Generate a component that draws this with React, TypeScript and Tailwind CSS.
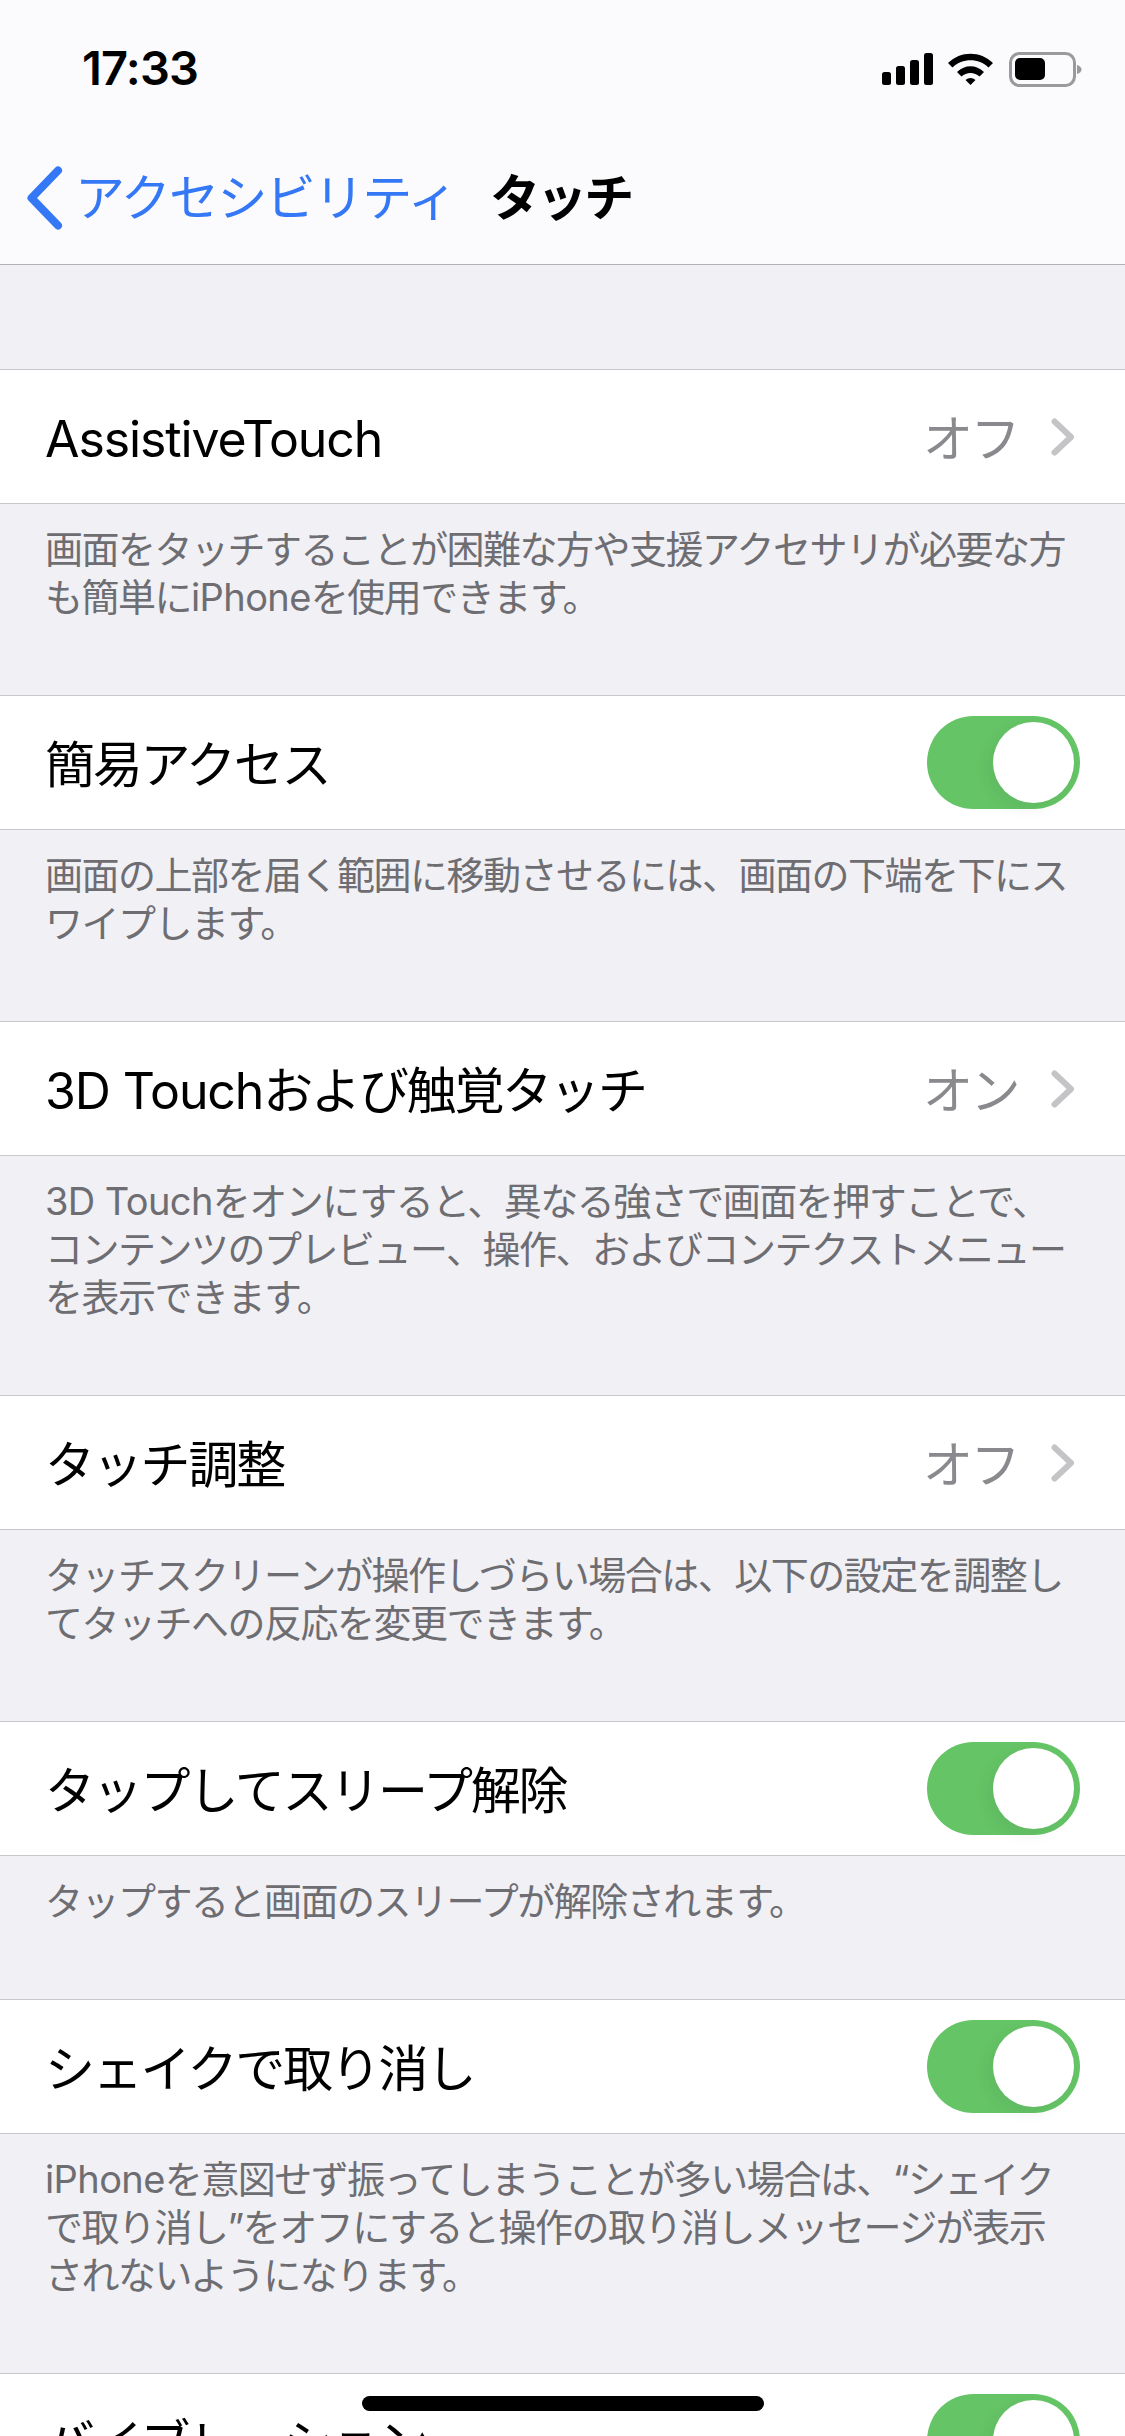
import React from "react";

function Mixed({ text, latin }: { text: string; latin: string }) {
  const parts = text.split(/([\x20-\x7e]+)/).filter(Boolean);
  return (
    <>
      {parts.map((p, i) =>
        /^[\x20-\x7e]+$/.test(p) ? (
          <span key={i} className={latin}>{p}</span>
        ) : (
          <span key={i}>{p}</span>
        )
      )}
    </>
  );
}

function Chevron() {
  return (
    <svg width="24" height="38" viewBox="0 0 24 38" fill="none" className="ml-[33px] mr-[5px]">
      <path d="M3.5 3.5 L20 19 L3.5 34.5" stroke="#c4c4c7" strokeWidth="6" strokeLinecap="round" strokeLinejoin="round" />
    </svg>
  );
}

function Toggle() {
  return (
    <div className="w-[153px] h-[93px] rounded-full bg-[#65c466] p-[6px] flex justify-end">
      <div className="w-[81px] h-[81px] rounded-full bg-white shadow-[-6px_6px_16px_rgba(0,0,0,0.06)]" />
    </div>
  );
}

function Row({ label, value, toggle }: { label: string; value?: string; toggle?: boolean }) {
  return (
    <div className="h-[135px] shrink-0 bg-white border-y border-[#c8c7cc] flex items-center pl-[45px] pr-[45px]">
      <span className="flex-1 pt-[5px] text-[50px] leading-none text-black tracking-[-2.2px] whitespace-nowrap">
        <Mixed text={label} latin="tracking-[-1.1px]" />
      </span>
      {value && <span className="pt-[5px] text-[50px] leading-none text-[#8a8a8e] tracking-[-2.5px]">{value}</span>}
      {value && <Chevron />}
      {toggle && <Toggle />}
    </div>
  );
}

function Footer({ lines }: { lines: string[] }) {
  return (
    <div className="shrink-0 pt-[21px] pb-[74px] pl-[45px] text-[38px] leading-[48px] text-[#6d6d72] tracking-[-1.5px]">
      {lines.map((l) => (
        <div key={l} className="whitespace-nowrap">
          <Mixed text={l} latin="tracking-[-0.6px]" />
        </div>
      ))}
    </div>
  );
}

function StatusIcons() {
  return (
    <svg width="200" height="36" viewBox="0 0 200 36" className="block">
      <rect x="0" y="20" width="9" height="13" rx="2.5" fill="#000" />
      <rect x="14" y="14" width="9" height="19" rx="2.5" fill="#000" />
      <rect x="28" y="8" width="9" height="25" rx="2.5" fill="#000" />
      <rect x="42" y="1" width="9" height="32" rx="2.5" fill="#000" />
      <path d="M66 11 C78.5 -1.5 98.5 -1.5 111 11 L106.5 15.5 C96.5 5.8 80.5 5.8 70.5 15.5 Z" fill="#000" />
      <path d="M75 20 C83 12.3 94 12.3 102 20 L97.5 24.5 C92.5 19.8 84.5 19.8 79.5 24.5 Z" fill="#000" />
      <path d="M83.5 28 C86.5 25.3 90.5 25.3 93.5 28 L88.5 33 Z" fill="#000" />
      <rect x="128.5" y="1.5" width="64" height="32" rx="9" fill="none" stroke="#9a9a9c" strokeWidth="3" />
      <rect x="133" y="6" width="30" height="22" rx="5" fill="#000" />
      <path d="M195 13 C198 14 199.5 15.5 199.5 17.5 C199.5 19.5 198 21 195 22 Z" fill="#9a9a9c" />
    </svg>
  );
}

export default function App() {
  return (
    <div className="relative w-[1125px] h-[2436px] overflow-hidden bg-[#f1f0f5] flex flex-col [font-family:Inter,'Noto_Sans_CJK_JP',sans-serif]">
      <header className="h-[265px] shrink-0 bg-[#fbfbfd] border-b border-[#b2b2b2] flex flex-col">
        <div className="h-[166px] shrink-0 flex items-start justify-between pl-[82px] pr-[43px] pt-[44px]">
          <span className="text-[47px] leading-[48px] font-semibold text-black tracking-[-0.8px]">17:33</span>
          <div className="pt-[8px]"><StatusIcons /></div>
        </div>
        <div className="flex items-center pl-[26px]">
          <svg width="38" height="64" viewBox="0 0 38 64" fill="none">
            <path d="M32 4.5 L5.5 32 L32 59.5" stroke="#3478f6" strokeWidth="8" strokeLinecap="round" strokeLinejoin="round" />
          </svg>
          <span className="ml-[11px] text-[50px] leading-none text-[#3478f6] tracking-[-1.7px] whitespace-nowrap">アクセシビリティ</span>
          <span className="ml-[34px] text-[50px] leading-none font-bold text-black tracking-[-2.8px]">タッチ</span>
        </div>
      </header>

      <div className="h-[104px] shrink-0" />
      <Row label="AssistiveTouch" value="オフ" />
      <Footer lines={["画面をタッチすることが困難な方や支援アクセサリが必要な方", "も簡単にiPhoneを使用できます。"]} />
      <Row label="簡易アクセス" toggle />
      <Footer lines={["画面の上部を届く範囲に移動させるには、画面の下端を下にス", "ワイプします。"]} />
      <Row label="3D Touchおよび触覚タッチ" value="オン" />
      <Footer lines={["3D Touchをオンにすると、異なる強さで画面を押すことで、", "コンテンツのプレビュー、操作、およびコンテクストメニュー", "を表示できます。"]} />
      <Row label="タッチ調整" value="オフ" />
      <Footer lines={["タッチスクリーンが操作しづらい場合は、以下の設定を調整し", "てタッチへの反応を変更できます。"]} />
      <Row label="タップしてスリープ解除" toggle />
      <Footer lines={["タップすると画面のスリープが解除されます。"]} />
      <Row label="シェイクで取り消し" toggle />
      <Footer lines={["iPhoneを意図せず振ってしまうことが多い場合は、“シェイク", "で取り消し”をオフにすると操作の取り消しメッセージが表示", "されないようになります。"]} />
      <Row label="バイブレーション" toggle />

      <div className="absolute left-[362px] top-[2396px] w-[402px] h-[15px] rounded-full bg-black" />
    </div>
  );
}
